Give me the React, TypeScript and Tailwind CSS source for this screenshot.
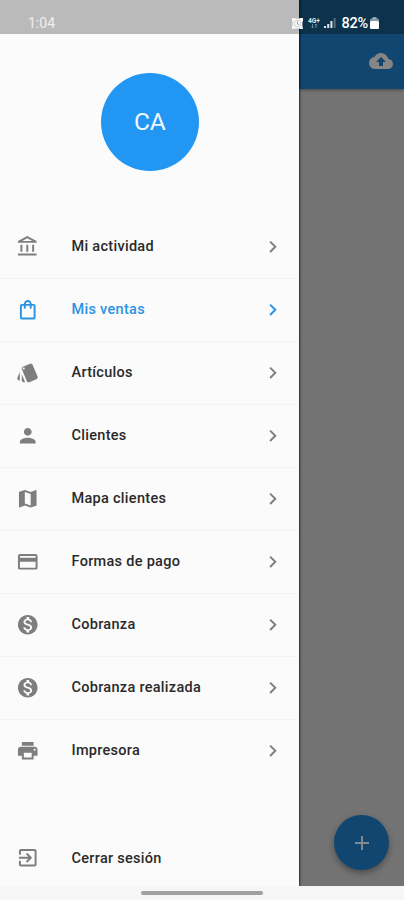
import type { IconType } from "react-icons";
import {
  MdBackup,
  MdChevronRight,
  MdAdd,
  MdCreditCard,
  MdExitToApp,
  MdMap,
  MdMonetizationOn,
  MdOutlineAccountBalance,
  MdOutlineShoppingBag,
  MdPerson,
  MdPrint,
  MdStyle,
} from "react-icons/md";

type Item = { label: string; icon: IconType; active?: boolean };

const items: Item[] = [
  { label: "Mi actividad", icon: MdOutlineAccountBalance },
  { label: "Mis ventas", icon: MdOutlineShoppingBag, active: true },
  { label: "Artículos", icon: MdStyle },
  { label: "Clientes", icon: MdPerson },
  { label: "Mapa clientes", icon: MdMap },
  { label: "Formas de pago", icon: MdCreditCard },
  { label: "Cobranza", icon: MdMonetizationOn },
  { label: "Cobranza realizada", icon: MdMonetizationOn },
  { label: "Impresora", icon: MdPrint },
];

function MenuRow({ item, last }: { item: Item; last: boolean }) {
  const Icon = item.icon;
  return (
    <li
      className={`flex h-[63px] items-center border-b pr-[15px] pl-4 ${last ? "border-transparent" : "border-[#f4f4f4]"} ${item.active ? "text-[#2b93e4]" : "text-[#7e7e7e]"}`}
    >
      <Icon className="size-[23.5px] shrink-0" />
      <span
        className={`ml-[32px] flex-1 pt-px text-[14.5px] font-medium tracking-[0.29px] ${item.active ? "text-[#2b93e4]" : "text-[#2a2a2a]"}`}
      >
        {item.label}
      </span>
      <MdChevronRight className="size-[23.5px] shrink-0" />
    </li>
  );
}

function StatusIcons() {
  return (
    <div className="flex items-center text-white">
      <svg className="h-[11px] w-[11px]" viewBox="0 0 11 11">
        <path d="M0 0h3l1 .8h3L8 0h3v3l-.6 1v4l.6 3H8l-1-.5H4L3 11H0V8l.6-1V4L0 3z" fill="#f5f5f5" />
        <circle cx="5.5" cy="5.5" r="3.3" fill="none" stroke="#c8cdd0" strokeWidth=".8" />
        <path d="M5.5 3.5v2.3L7 6.7" fill="none" stroke="#8b959b" strokeWidth=".9" />
      </svg>
      <svg className="ml-[5px] h-3 w-3" viewBox="0 0 12 12">
        <text x="0" y="6" fontSize="6.5" fontWeight="700" fill="#dce6ec" textLength="12" lengthAdjust="spacingAndGlyphs">
          4G+
        </text>
        <path d="M4.5 7v4M3.2 9.7L4.5 11l1.3-1.3M8 11V7M6.7 8.3L8 7l1.3 1.3" stroke="#7f98a8" strokeWidth=".8" fill="none" />
      </svg>
      <svg className="ml-1 h-3 w-3" viewBox="0 0 12 12" fill="#dce6ec">
        <path d="M0 9h2v2H0zM3.2 7h2v4h-2zM6.4 4h2v7h-2z" />
        <path d="M9.6 1h2v10h-2z" opacity=".35" />
      </svg>
      <span className="ml-[5px] pt-px text-[14.5px] leading-4 font-medium tracking-[-0.2px]">82%</span>
      <svg className="ml-[2px] h-3 w-[9px]" viewBox="0 0 9 12" fill="#fff">
        <path d="M2.5 0h4v2h-4z" opacity=".5" />
        <rect y="1.5" width="9" height="10.5" rx="1.5" opacity=".5" />
        <rect y="4" width="9" height="8" rx="1.5" />
      </svg>
    </div>
  );
}

export default function App() {
  return (
    <div className="relative flex h-[900px] w-[404px] flex-col overflow-hidden bg-[#f6f6f6] font-['Roboto',sans-serif]">
      <div className="flex h-[885.5px]">
        <aside className="z-10 flex w-[299px] shrink-0 flex-col bg-[#fbfbfb] shadow-[1px_0_2px_rgba(0,0,0,0.65)]">
          <div className="h-[33.5px] shrink-0 bg-[#bababa]" />
          <div className="mt-[39px] ml-[100.5px] flex size-[98.5px] shrink-0 items-center justify-center rounded-full bg-[#2196f3] pt-px text-[24.5px] tracking-[-0.2px] text-[#f2f9ff]">
            CA
          </div>
          <ul className="mt-[44.5px]">
            {items.map((item, i) => (
              <MenuRow key={item.label} item={item} last={i === items.length - 1} />
            ))}
          </ul>
          <div className="mt-auto flex h-[55px] items-center pl-4 text-[#7e7e7e]">
            <MdExitToApp className="size-[23.5px]" />
            <span className="ml-[32px] pt-px text-[14.5px] font-medium tracking-[0.29px] text-[#2a2a2a]">Cerrar sesión</span>
          </div>
        </aside>
        <main className="flex flex-1 flex-col bg-[#737373]">
          <div className="h-[33.5px] bg-[#0d324c]" />
          <header className="flex h-[55px] items-center justify-end bg-[#10466f] pr-[11px] shadow-[0_1px_3px_rgba(0,0,0,0.4)]">
            <MdBackup className="size-6 text-[#858585]" />
          </header>
          <button className="mt-auto mr-[15px] mb-[15.5px] flex size-[55px] items-center justify-center self-end rounded-full bg-[#10466f] text-[#84898d] shadow-[0_3px_6px_rgba(0,0,0,0.35)]">
            <MdAdd className="size-6" />
          </button>
        </main>
      </div>
      <div className="z-20 flex h-[14.5px] justify-center bg-[#f6f6f6]">
        <div className="mt-[5.5px] h-[4px] w-[122px] rounded-full bg-[#a0a0a0]" />
      </div>
      <div className="absolute inset-x-0 top-0 z-20 flex h-[33px] items-center justify-between pt-[13px] pr-[25px] pl-[28px]">
        <span className="text-[14px] leading-4 text-[#f0f0f0]">1:04</span>
        <StatusIcons />
      </div>
    </div>
  );
}
